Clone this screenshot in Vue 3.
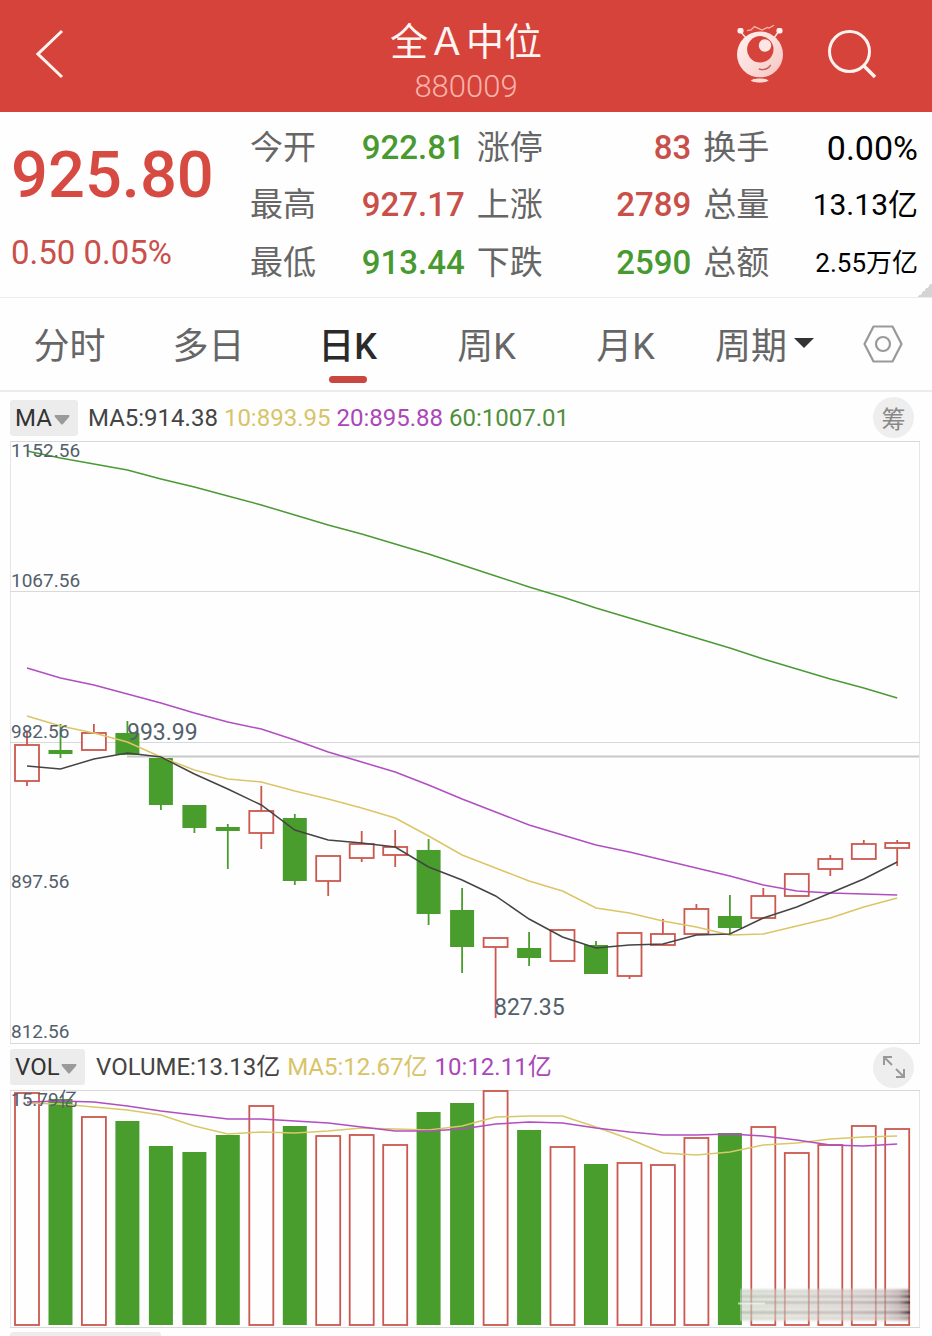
<template>
  <div class="quote-page">
    <header class="top-bar">
      <button class="icon-btn" type="button" aria-label="返回">
        <svg width="28" height="50" viewBox="0 0 28 50" fill="none">
          <path d="M26 2 L2 25 L26 48" stroke="#fff3f0" stroke-width="3" />
        </svg>
      </button>
      <div class="heading">
        <h1 class="name">全Ａ中位</h1>
        <span class="code">880009</span>
      </div>
      <div class="actions">
        <button class="icon-btn" type="button" aria-label="助手">
          <svg width="48" height="60" viewBox="0 0 48 60" fill="none">
            <defs>
              <linearGradient id="robot" x1="0" y1="0" x2="1" y2="1">
                <stop offset="0" stop-color="#fff3f1" />
                <stop offset="0.5" stop-color="#fbdedb" />
                <stop offset="1" stop-color="#f6c3bf" />
              </linearGradient>
            </defs>
            <path d="M4 7 L10 14 M43 7 L38 14" stroke="#fbdedb" stroke-width="1.6" />
            <rect x="1.5" y="4" width="6" height="5.5" rx="2" fill="#fff1ee" />
            <rect x="40.5" y="4" width="6" height="5.5" rx="2" fill="#fff1ee" />
            <path d="M11 6.7 L15 6 L18.5 2.6 L26 6 L31.5 3.5 L33 4 L38 1.3" stroke="#f7b5ae" stroke-width="1.3" />
            <circle cx="24" cy="30.5" r="23" fill="url(#robot)" />
            <circle cx="24.3" cy="25.3" r="13.2" fill="#d6433b" />
            <circle cx="29" cy="21.5" r="6.2" fill="#fde6e3" />
            <path d="M22.8 44.8 Q30 47.5 34.8 41" stroke="#b9605c" stroke-width="1.3" />
            <ellipse cx="23.7" cy="56.5" rx="9" ry="2.6" fill="#fbd9d5" stroke="#d6433b" stroke-width="1" />
          </svg>
        </button>
        <button class="icon-btn" type="button" aria-label="搜索">
          <svg width="50" height="50" viewBox="0 0 50 50" fill="none" stroke="#fff3f0">
            <circle cx="22.5" cy="22.5" r="20" stroke-width="3" />
            <path d="M37 37 L48 48" stroke-width="3.6" />
          </svg>
        </button>
      </div>
    </header>

    <section class="summary">
      <div class="latest">
        <strong class="price">925.80</strong>
        <span class="change">0.50 0.05%</span>
      </div>
      <dl class="stats">
        <div v-for="item in stats" :key="item.label" class="stat">
          <dt>{{ item.label }}</dt>
          <dd :class="[item.tone, item.size]">{{ item.value }}</dd>
        </div>
      </dl>
      <span class="corner"></span>
    </section>

    <nav class="tabs">
      <button
        v-for="tab in tabs"
        :key="tab"
        type="button"
        class="tab"
        :class="{ active: tab === activeTab }"
        @click="activeTab = tab"
      >
        {{ tab }}
        <svg v-if="tab === '周期'" class="tab-arrow" width="20" height="10" viewBox="0 0 20 10">
          <path d="M0 0 H20 L10 10 Z" fill="#333" />
        </svg>
      </button>
      <button class="settings" type="button" aria-label="设置">
        <svg width="40" height="38" viewBox="0 0 40 38" fill="none" stroke="#999" stroke-width="2.2">
          <path d="M10.5 1.5 H29.5 L38.5 19 L29.5 36.5 H10.5 L1.5 19 Z" stroke-linejoin="round" />
          <circle cx="20" cy="19" r="7" />
        </svg>
      </button>
    </nav>

    <main class="charts">
      <div class="legend legend-price">
        <label class="picker picker-ma">
          <select v-model="mainIndicator" aria-label="主图指标">
            <option>MA</option>
            <option>BOLL</option>
          </select>
          <svg class="picker-arrow" width="16" height="10" viewBox="0 0 16 10">
            <path d="M1 0 H15 Q16 1 15 2 L9 9 Q8 10 7 9 L1 2 Q0 1 1 0 Z" fill="#9a9a9a" />
          </svg>
        </label>
        <span class="c-dark">MA5:914.38</span>
        <span class="c-yellow">10:893.95</span>
        <span class="c-purple">20:895.88</span>
        <span class="c-green">60:1007.01</span>
        <button class="round" type="button">筹</button>
      </div>

      <svg class="chart" viewBox="10 441 910 603" fill="none">
        <path d="M10.5 441 V1044 M919.5 441 V1044" stroke="#e6e6e6" />
        <path d="M10 441.5 H920 M10 591.5 H920 M10 742.5 H920 M10 1043.5 H920" stroke="#d9d9d9" />
        <path d="M127 756.5 H919" stroke="#c8c8c8" stroke-width="2" />
        <g v-for="(c, i) in candles" :key="i" :class="c[0] ? 'up' : 'down'">
          <path class="wick" :d="`M${x(i)} ${c[3]} V${c[1]} M${x(i)} ${c[2]} V${c[4]}`" />
          <rect class="body" :x="x(i) - 12" :y="c[1]" width="24" :height="c[2] - c[1]" />
        </g>
        <polyline v-for="line in priceLines" :key="line.color" :points="points(line.ys)" :stroke="line.color" stroke-width="1.5" />
        <g class="axis">
          <text v-for="label in priceLabels" :key="label.text" x="11" :y="label.y">{{ label.text }}</text>
        </g>
        <text class="mark" x="127" y="740">993.99</text>
        <text class="mark" x="494" y="1015">827.35</text>
      </svg>

      <div class="legend legend-volume">
        <label class="picker picker-vol">
          <select v-model="subIndicator" aria-label="副图指标">
            <option>VOL</option>
            <option>MACD</option>
          </select>
          <svg class="picker-arrow" width="16" height="10" viewBox="0 0 16 10">
            <path d="M1 0 H15 Q16 1 15 2 L9 9 Q8 10 7 9 L1 2 Q0 1 1 0 Z" fill="#9a9a9a" />
          </svg>
        </label>
        <span class="c-dark">VOLUME:13.13亿</span>
        <span class="c-yellow">MA5:12.67亿</span>
        <span class="c-purple">10:12.11亿</span>
        <button class="round" type="button" aria-label="展开">
          <svg width="22" height="22" viewBox="0 0 22 22" fill="none" stroke="#999" stroke-width="2">
            <path d="M1 9 V1 H9 M1 1 L9 9 M21 13 V21 H13 M13 13 L21 21" />
          </svg>
        </button>
      </div>

      <svg class="chart" viewBox="10 1090 910 238" fill="none">
        <defs>
          <linearGradient id="smudge" x1="0" x2="1" y1="0" y2="0">
            <stop offset="0" stop-color="#d3dccb" />
            <stop offset="0.3" stop-color="#dedbd4" />
            <stop offset="0.85" stop-color="#d5cbc8" />
            <stop offset="1" stop-color="#a98f8f" />
          </linearGradient>
          <linearGradient id="streak" x1="0" x2="1" y1="0" y2="0">
            <stop offset="0" stop-color="#8f9a88" stop-opacity="0.5" />
            <stop offset="0.6" stop-color="#8d8783" stop-opacity="0.4" />
            <stop offset="0.93" stop-color="#6b5f5f" stop-opacity="0.5" />
            <stop offset="1" stop-color="#1f1518" />
          </linearGradient>
          <filter id="soft" x="-5%" y="-20%" width="110%" height="140%">
            <feGaussianBlur stdDeviation="0.5 1" />
          </filter>
        </defs>
        <path d="M10.5 1090 V1328 M919.5 1090 V1328" stroke="#e6e6e6" />
        <path d="M10 1090.5 H920 M10 1327.5 H920" stroke="#d9d9d9" />
        <g v-for="(top, i) in volumes" :key="i" :class="candles[i][0] ? 'up' : 'down'">
          <rect class="body" :x="x(i) - 12" :y="top" width="24" :height="1325 - top" />
        </g>
        <polyline v-for="line in volumeLines" :key="line.color" :points="points(line.ys)" :stroke="line.color" stroke-width="1.5" />
        <g class="axis">
          <text x="11" y="1106">15.79亿</text>
        </g>
        <!-- smeared patch over the last bars -->
        <g filter="url(#soft)">
          <rect x="740" y="1289" width="170" height="32" fill="url(#smudge)" opacity="0.6" />
          <rect
            v-for="s in streaks"
            :key="s[0]"
            x="740"
            :y="s[0]"
            width="170"
            :height="s[1]"
            fill="url(#streak)"
            :opacity="s[2]"
          />
        </g>
        <path d="M738 1303.5 H765" stroke="#fff" stroke-width="2" opacity="0.6" />
      </svg>
      <div class="next-panel"></div>
    </main>
  </div>
</template>

<script setup>
import { ref } from 'vue'

const tabs = ['分时', '多日', '日K', '周K', '月K', '周期']
const activeTab = ref('日K')
const mainIndicator = ref('MA')
const subIndicator = ref('VOL')

const stats = [
  { label: '今开', value: '922.81', tone: 'fall' },
  { label: '涨停', value: '83', tone: 'rise' },
  { label: '换手', value: '0.00%', tone: 'flat', size: 'large' },
  { label: '最高', value: '927.17', tone: 'rise' },
  { label: '上涨', value: '2789', tone: 'rise' },
  { label: '总量', value: '13.13亿', tone: 'flat', size: 'medium' },
  { label: '最低', value: '913.44', tone: 'fall' },
  { label: '下跌', value: '2590', tone: 'fall' },
  { label: '总额', value: '2.55万亿', tone: 'flat', size: 'small' }
]

const priceLabels = [
  { text: '1152.56', y: 457 },
  { text: '1067.56', y: 587 },
  { text: '982.56', y: 738 },
  { text: '897.56', y: 888 },
  { text: '812.56', y: 1038 }
]

// [rising, body top, body bottom, high, low]
const candles = [
  [1, 745, 781, 732, 786],
  [0, 750, 754, 724, 758],
  [1, 733, 750, 724, 750],
  [0, 733, 755, 721, 755],
  [0, 758, 805, 758, 810],
  [0, 805, 828, 805, 833],
  [0, 827, 831, 824, 869],
  [1, 811, 833, 786, 849],
  [0, 818, 881, 814, 885],
  [1, 856, 881, 856, 896],
  [1, 844, 858, 831, 862],
  [1, 847, 855, 830, 867],
  [0, 850, 914, 839, 925],
  [0, 910, 947, 888, 973],
  [1, 938, 947, 938, 1018],
  [0, 948, 958, 932, 966],
  [1, 930, 961, 930, 961],
  [0, 945, 974, 941, 974],
  [1, 933, 976, 933, 979],
  [1, 934, 945, 919, 945],
  [1, 909, 934, 904, 934],
  [0, 916, 928, 895, 935],
  [1, 896, 918, 888, 918],
  [1, 874, 896, 874, 896],
  [1, 859, 869, 855, 876],
  [1, 844, 859, 840, 859],
  [1, 843, 848, 840, 866]
]

const priceLines = [
  {
    color: '#4a9a35',
    ys: [451, 458, 464, 470, 479, 487, 496, 505, 515, 525, 534, 544, 554, 565, 576, 587, 597, 608, 618, 628, 638, 648, 659, 669, 679, 688, 698]
  },
  {
    color: '#b14ec2',
    ys: [668, 678, 685, 694, 703, 713, 722, 729, 740, 752, 762, 772, 785, 799, 812, 825, 835, 845, 852, 860, 868, 876, 885, 891, 893, 894, 895]
  },
  {
    color: '#dcc566',
    ys: [716, 726, 733, 742, 757, 770, 779, 782, 791, 799, 808, 818, 836, 855, 868, 881, 891, 908, 913, 921, 927, 935, 934, 926, 918, 907, 898]
  },
  {
    color: '#444',
    ys: [766, 769, 759, 753, 757, 774, 789, 805, 830, 840, 843, 847, 867, 880, 896, 919, 937, 948, 945, 944, 935, 934, 918, 907, 893, 879, 862]
  }
]

const volumes = [
  1093, 1099, 1117, 1121, 1146, 1152, 1135, 1106, 1126, 1136, 1135, 1145, 1112, 1103,
  1091, 1130, 1147, 1164, 1163, 1165, 1138, 1133, 1127, 1153, 1145, 1126, 1129
]

const volumeLines = [
  {
    color: '#d9c868',
    ys: [1103, 1104, 1107, 1110, 1115, 1126, 1134, 1132, 1133, 1131, 1128, 1129, 1130, 1126, 1117, 1116, 1116, 1127, 1139, 1153, 1155, 1152, 1145, 1143, 1139, 1137, 1136]
  },
  {
    color: '#b14ec2',
    ys: [1102, 1101, 1102, 1106, 1111, 1115, 1119, 1119, 1121, 1123, 1127, 1131, 1131, 1129, 1124, 1122, 1123, 1128, 1132, 1135, 1135, 1134, 1136, 1140, 1145, 1146, 1144]
  }
]

// [top, height, opacity]
const streaks = [
  [1290, 3, 0.4],
  [1295, 3, 0.8],
  [1301, 3, 1],
  [1306, 2, 0.4],
  [1311, 3, 1],
  [1317, 2, 0.4]
]

const x = (i) => Math.round((27 + i * 33.47) * 10) / 10

const points = (ys) => ys.map((y, i) => `${x(i)},${y}`).join(' ')
</script>

<style>
body {
  margin: 0;
  background: #fefefe;
}
</style>

<style scoped>
.quote-page {
  background: #fefefe;
  font-family: Roboto, "Noto Sans CJK SC", sans-serif;
  color: #333;
}

button {
  border: 0;
  padding: 0;
  background: none;
  font-family: inherit;
  cursor: pointer;
}

svg {
  display: block;
}

/* Header */
.top-bar {
  display: grid;
  grid-template-columns: 1fr auto 1fr;
  align-items: center;
  height: 112px;
  padding: 0 55px 4px 36px;
  box-sizing: border-box;
  background: #d6433b;
}

.icon-btn {
  justify-self: start;
}

.heading {
  display: flex;
  flex-direction: column;
  align-items: center;
  padding: 10px 0 0 19px;
}

.name {
  margin: 0;
  font-size: 38px;
  font-weight: 400;
  line-height: 56px;
  color: #fff6f4;
  font-family: "Noto Sans CJK SC", sans-serif;
}

.code {
  font-size: 31px;
  font-weight: 300;
  line-height: 40px;
  color: #f8b3aa;
}

.actions {
  display: flex;
  justify-content: flex-end;
  align-items: center;
  gap: 43px;
}

/* Quote summary */
.summary {
  position: relative;
  display: flex;
  height: 186px;
  box-sizing: border-box;
  padding: 7px 14px 5px 11px;
  border-bottom: 1px solid #ececec;
}

.latest {
  width: 239px;
  flex-shrink: 0;
  display: flex;
  flex-direction: column;
  color: #d64a41;
}

.price {
  margin-top: 16px;
  font-size: 65px;
  line-height: 80px;
  font-weight: 500;
}

.change {
  margin-top: 12px;
  font-size: 33px;
  line-height: 52px;
  color: #c94f49;
}

.stats {
  flex: 1;
  margin: 0;
  display: grid;
  grid-template-columns: repeat(3, 1fr);
  column-gap: 12px;
}

.stat {
  display: flex;
  justify-content: space-between;
  align-items: center;
  white-space: nowrap;
}

.stat dt {
  font-size: 33px;
  line-height: 48px;
  font-weight: 400;
  color: #666;
}

.stat dd {
  margin: 0;
  font-size: 33px;
  line-height: 48px;
  font-weight: 500;
}

.stat .rise {
  color: #c94f49;
}

.stat .fall {
  color: #48992f;
}

.stat .flat {
  color: #000;
  font-weight: 400;
}

.stat .large {
  font-size: 34px;
}

.stat .medium {
  font-size: 30px;
}

.stat .small {
  font-size: 26px;
}

.corner {
  position: absolute;
  right: 0;
  bottom: 0;
  width: 14px;
  height: 14px;
  background: linear-gradient(135deg, transparent 50%, #d4d4d4 50%);
}

/* Tabs */
.tabs {
  display: flex;
  height: 94px;
  box-sizing: border-box;
  border-bottom: 2px solid #ececec;
}

.tab {
  position: relative;
  flex: 139;
  display: flex;
  align-items: center;
  justify-content: center;
  gap: 7px;
  padding-bottom: 2px;
  font-size: 36px;
  font-weight: 400;
  color: #666;
}

.tab.active {
  color: #2a2a2a;
  font-weight: 500;
}

.tab.active::after {
  content: '';
  position: absolute;
  left: 50%;
  bottom: 7px;
  width: 38px;
  height: 7px;
  margin-left: -19px;
  border-radius: 4px;
  background: #c94641;
}

.settings {
  flex: 98;
  display: flex;
  align-items: center;
  justify-content: center;
}

/* Charts */
.charts {
  padding: 0 12px 0 10px;
}

.legend {
  display: flex;
  align-items: center;
  gap: 6px;
  font-size: 24px;
  line-height: 36px;
  white-space: nowrap;
}

.legend-price {
  height: 49px;
  box-sizing: border-box;
  padding-top: 2px;
}

.legend-volume {
  height: 46px;
  gap: 7px;
}

.picker {
  position: relative;
  display: flex;
  height: 36px;
  margin-right: 4px;
}

.picker-ma {
  width: 68px;
}

.picker-vol {
  width: 75px;
}

.picker select {
  appearance: none;
  width: 100%;
  margin: 0;
  padding: 0 0 0 5px;
  border: 0;
  border-radius: 3px;
  background: #ececec;
  color: #333;
  font-family: inherit;
  font-size: 24px;
}

.picker-arrow {
  position: absolute;
  right: 8px;
  top: 15px;
  pointer-events: none;
}

.c-dark {
  color: #444;
}

.c-yellow {
  color: #d8c468;
}

.c-purple {
  color: #ab47b8;
}

.c-green {
  color: #4f8f3c;
}

.round {
  display: flex;
  align-items: center;
  justify-content: center;
  width: 41px;
  height: 41px;
  margin-left: auto;
  margin-right: 6px;
  border-radius: 50%;
  background: #eee;
  color: #888;
  font-size: 24px;
}

.chart {
  width: 100%;
  height: auto;
  overflow: visible;
}

.axis text,
.mark {
  fill: #53606b;
  font-size: 19px;
}

.mark {
  font-size: 23px;
}

.up .body {
  fill: #fefefe;
  stroke: #cb584f;
  stroke-width: 1.8px;
}

.up .wick {
  stroke: #cb584f;
  stroke-width: 1.8px;
}

.down .body {
  fill: #489d2d;
}

.down .wick {
  stroke: #489d2d;
  stroke-width: 1.8px;
}

.next-panel {
  width: 151px;
  height: 4px;
  margin-top: 4px;
  border-radius: 3px 3px 0 0;
  background: #ececec;
}
</style>
